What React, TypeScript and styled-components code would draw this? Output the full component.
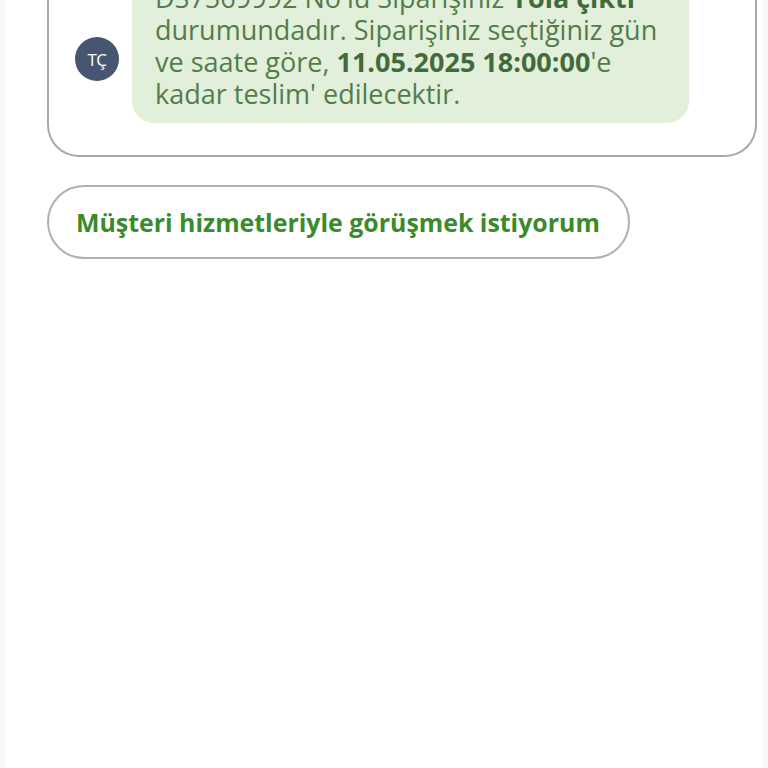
import React from "react";
import styled, { createGlobalStyle } from "styled-components";

const GlobalStyle = createGlobalStyle`
    html, body {
        margin: 0;
        padding: 0;
        background: #f7f7f7;
        overflow: hidden;
    }
    #root {
        height: 768px;
    }
`

const Page = styled.div`
    box-sizing: border-box;
    height: 768px;
    margin: 0 5px;
    background: #ffffff;
    padding: 0 6px 0 42px;
    font-family: "Open Sans", "Noto Sans", sans-serif;
    overflow: hidden;
`

const Card = styled.div`
    margin-top: -28px;
    border: 2px solid #a8a8a8;
    border-top: none;
    border-radius: 0 0 32px 32px;
    padding: 0 66px 32px 26px;
    display: flex;
    align-items: flex-end;
    gap: 13px;
`

const Avatar = styled.div`
    flex: 0 0 44px;
    height: 44px;
    margin-bottom: 42px;
    border-radius: 50%;
    background: #475670;
    color: #ffffff;
    font-size: 17px;
    display: flex;
    align-items: center;
    justify-content: center;
    letter-spacing: -0.5px;
`

const Bubble = styled.div`
    flex: 1;
    background: #e2efdb;
    border-radius: 0 0 22px 22px;
    padding: 10px 20px 13px 23px;
    color: #527d4b;
    font-size: 27px;
    line-height: 32px;

    b {
        font-weight: 700;
        color: #426b3d;
    }
`

const Actions = styled.div`
    margin-top: 28px;
    display: flex;
`

const ActionButton = styled.button`
    height: 74px;
    padding: 0 28px 0 27px;
    border: 2px solid #b0b0b0;
    border-radius: 37px;
    background: #ffffff;
    color: #3b8a2b;
    font-family: "Open Sans", "Noto Sans", sans-serif;
    font-size: 24.9px;
    font-weight: 700;
    cursor: pointer;
`

const App = () => {
    return (
        <>
            <GlobalStyle />
            <Page>
                <Card>
                    <Avatar>TÇ</Avatar>
                    <Bubble>
                        DS7569992 No'lu Siparişiniz <b>Yola çıktı</b> durumundadır. Siparişiniz seçtiğiniz gün ve saate göre, <b>11.05.2025 18:00:00</b>'e kadar teslim' edilecektir.
                    </Bubble>
                </Card>
                <Actions>
                    <ActionButton>Müşteri hizmetleriyle görüşmek istiyorum</ActionButton>
                </Actions>
            </Page>
        </>
    )
}

export default App;
